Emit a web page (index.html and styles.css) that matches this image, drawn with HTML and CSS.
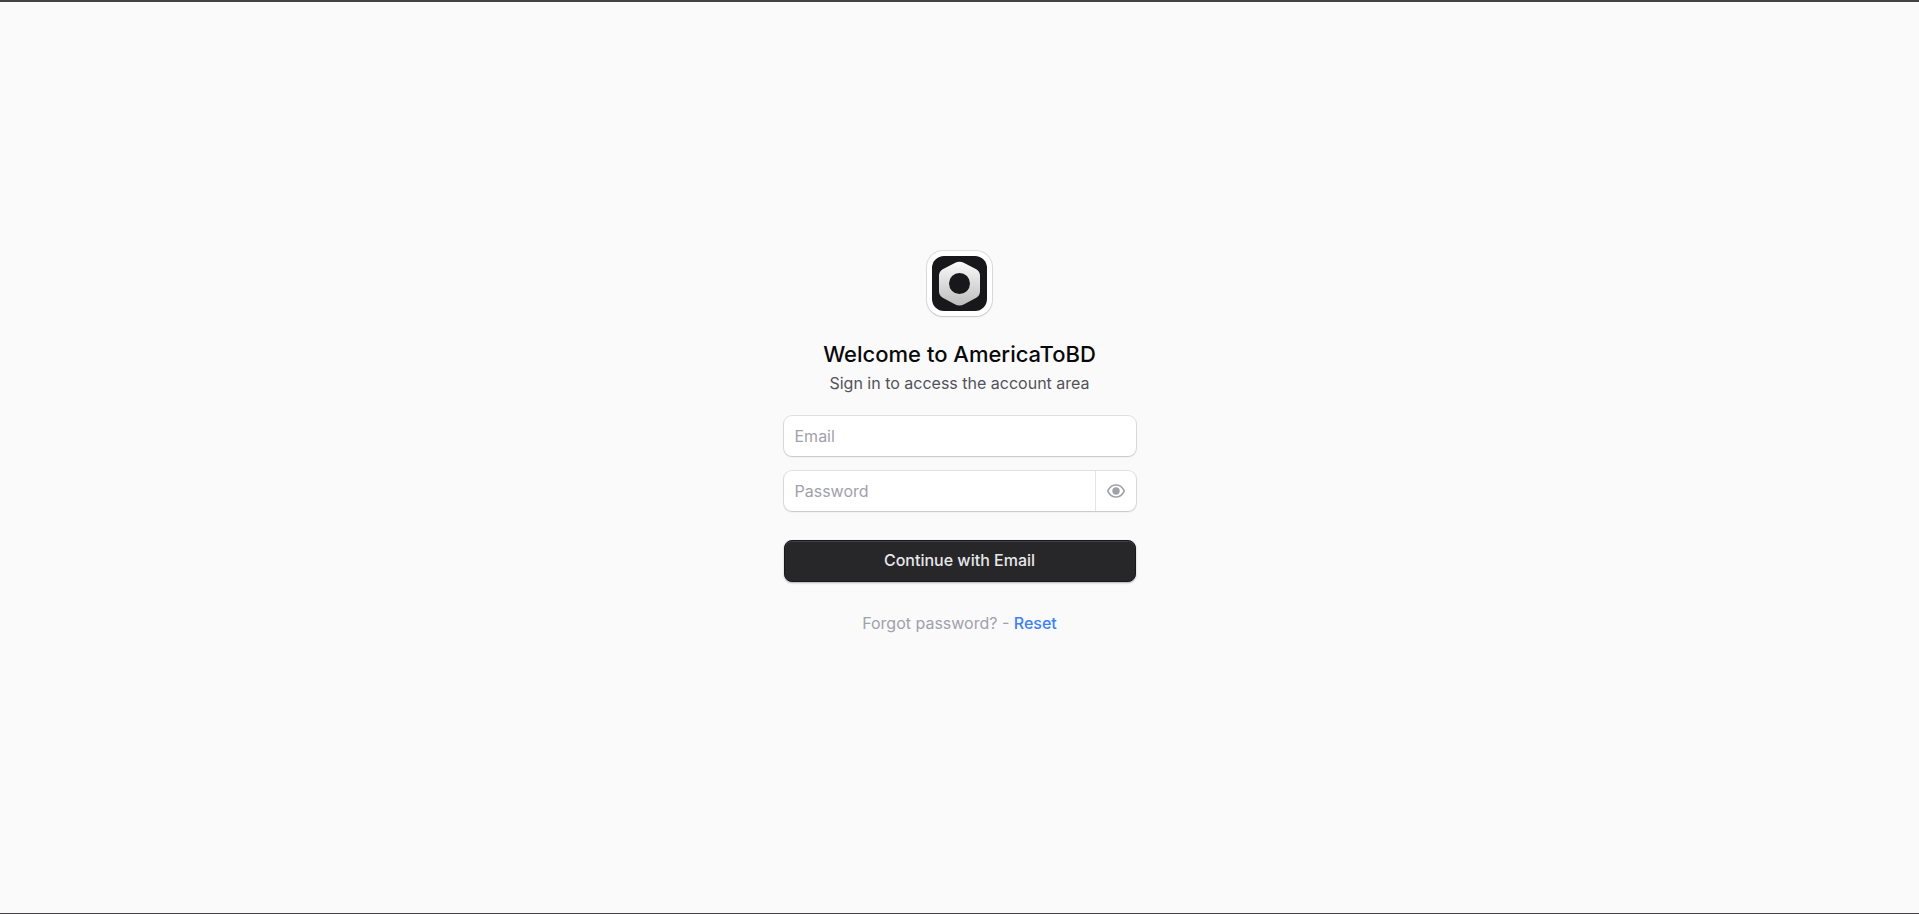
FILE: index.html
```html
<!DOCTYPE html>
<html lang="en">
<head>
    <meta charset="UTF-8">
    <meta name="viewport" content="width=device-width, initial-scale=1.0">
    <title>AmericaToBD</title>
    <link rel="stylesheet" href="styles.css">
</head>
<body>
    <main class="login">
        <div class="logo">
            <svg width="55" height="55" viewBox="0 0 55 55" aria-hidden="true">
                <defs>
                    <linearGradient id="nut" x1="0" y1="0" x2="0" y2="1">
                        <stop offset="0" stop-color="#fafafa"/>
                        <stop offset="1" stop-color="#bdbdbd"/>
                    </linearGradient>
                </defs>
                <rect width="55" height="55" rx="12" fill="#18181b"/>
                <path d="M44.300 13.300 L32.200 6.900 Q27.500 4.400 22.800 6.900 L10.700 13.300 Q7 15.400 7 19.800 V35.200 Q7 39.600 10.700 41.700 L22.800 48.200 Q27.500 50.700 32.200 48.200 L44.300 41.700 Q48 39.600 48 35.200 V19.800 Q48 15.400 44.300 13.300 Z" fill="url(#nut)"/>
                <circle cx="27.500" cy="27.500" r="10.500" fill="#18181b"/>
            </svg>
        </div>
        <h1 class="title">Welcome to AmericaToBD</h1>
        <p class="subtitle">Sign in to access the account area</p>
        <form class="form">
            <div class="field">
                <input class="input" type="email" placeholder="Email" aria-label="Email">
            </div>
            <div class="field">
                <input class="input" type="password" placeholder="Password" aria-label="Password">
                <button class="toggle" type="button" aria-label="Show password">
                    <svg width="18" height="14" viewBox="0 0 18 14" aria-hidden="true">
                        <path d="M1.300 8.100 C.8 7.400 .8 6.600 1.300 5.900 C3 2.900 5.700 1 9 1 S15 2.900 16.700 5.900 C17.200 6.600 17.200 7.400 16.700 8.100 C15 11.100 12.300 13 9 13 S3 11.100 1.300 8.100 Z" fill="none" stroke="#a1a1aa" stroke-width="1.700"/>
                        <circle cx="9" cy="7" r="3.700" fill="#a1a1aa"/>
                    </svg>
                </button>
            </div>
            <button class="submit" type="submit">Continue with Email</button>
        </form>
        <p class="forgot">Forgot password? - <a class="reset" href="#">Reset</a></p>
    </main>
</body>
</html>
```

FILE: styles.css
```css
* {
    margin: 0;
    padding: 0;
    box-sizing: border-box;
}

body {
    font-family: 'Inter', sans-serif;
    font-size: 16px;
    line-height: 24px;
    color: #18181b;
    background: #fafafa;
    min-height: 100vh;
    border-top: 2px solid #444244;
    border-bottom: 1px solid #444244;
    display: flex;
    align-items: center;
    justify-content: center;
}

.login {
    width: 352px;
    max-width: 100%;
    padding-bottom: 29px;
    display: flex;
    flex-direction: column;
    align-items: center;
    text-align: center;
}

.logo {
    display: flex;
    padding: 5px;
    margin-bottom: 21px;
    background: white;
    border-radius: 16px;
    box-shadow: 0 0 0 1px rgba(0,0,0,0.1), 0 1px 2px rgba(0,0,0,0.12);
}

.title {
    font-size: 22px;
    font-weight: 500;
    line-height: 34px;
    color: #09090b;
}

.subtitle {
    color: #52525b;
}

.form {
    width: 100%;
    margin: 21px 0 29px;
    display: flex;
    flex-direction: column;
    gap: 15px;
}

.field {
    display: flex;
    height: 40px;
    background: white;
    border-radius: 8px;
    overflow: hidden;
    box-shadow: 0 0 0 1px rgba(0,0,0,0.1), 0 1px 2px rgba(0,0,0,0.12);
}

.input {
    flex: 1;
    min-width: 0;
    padding: 0 11px;
    border: none;
    outline: none;
    background: transparent;
    font: inherit;
}

.input::placeholder {
    color: #a1a1aa;
}

.toggle {
    width: 41px;
    border: none;
    border-left: 1px solid #e4e4e7;
    background: transparent;
    display: flex;
    align-items: center;
    justify-content: center;
    cursor: pointer;
}

.submit {
    height: 42px;
    margin-top: 14px;
    padding-bottom: 2px;
    border: 1px solid #18181b;
    border-radius: 8px;
    background: #27272a;
    color: #e8e8ea;
    font: inherit;
    font-weight: 500;
    box-shadow: inset 0 1px 0 #414144, 0 1px 2px rgba(0,0,0,0.3);
    cursor: pointer;
}

.forgot {
    color: #a1a1aa;
}

.reset {
    color: #3b82f6;
    font-weight: 500;
    text-decoration: none;
}
```
